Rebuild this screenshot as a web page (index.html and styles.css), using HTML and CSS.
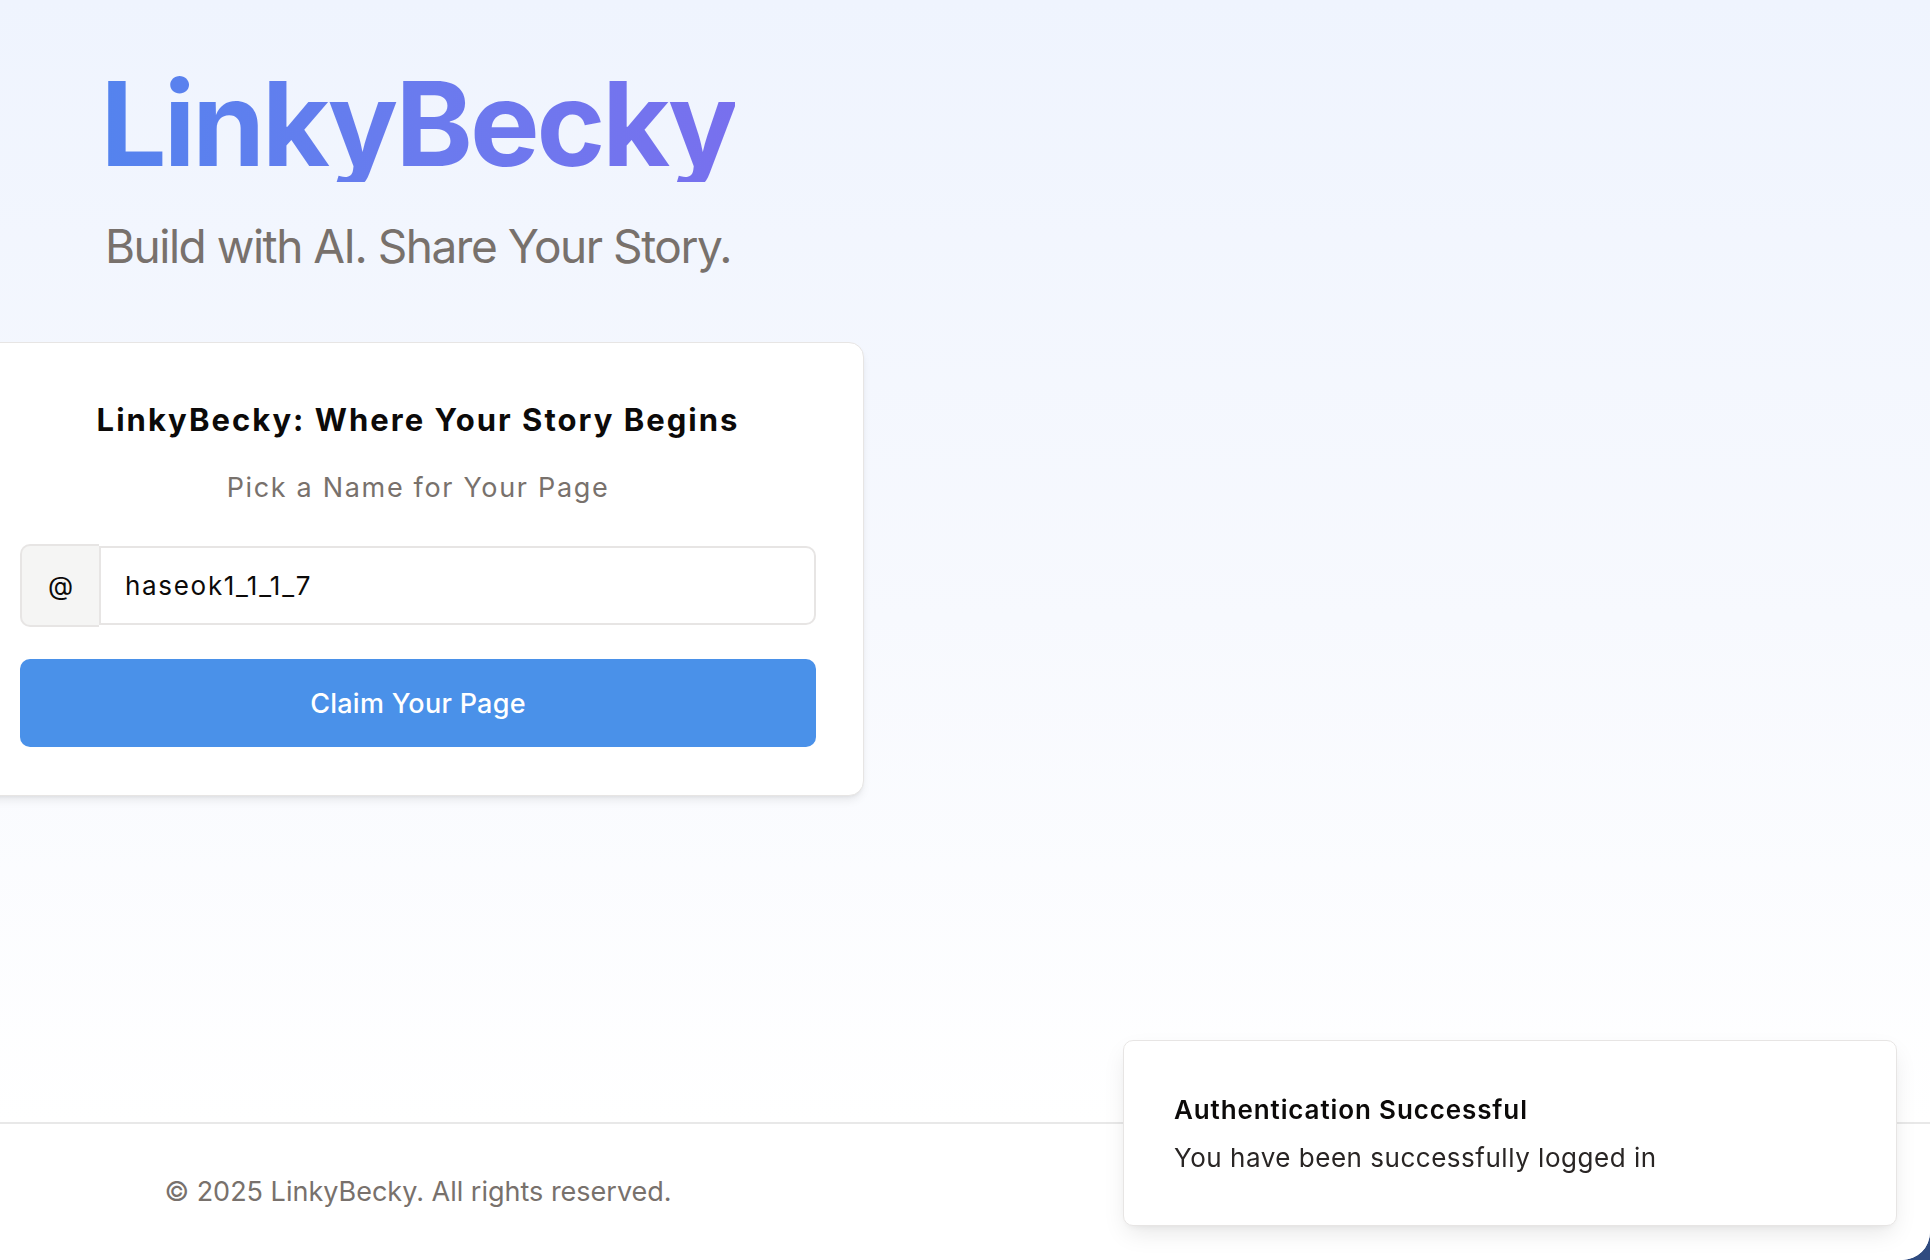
FILE: index.html
```html
<!DOCTYPE html>
<html lang="en">
<head>
<meta charset="utf-8">
<title>LinkyBecky</title>
<link rel="stylesheet" href="styles.css">
</head>
<body>
<div class="page">
  <main class="main">
    <section class="hero">
      <h1 class="brand">LinkyBecky</h1>
      <p class="tagline">Build with AI. Share Your Story.</p>
      <div class="card">
        <h2 class="card-title">LinkyBecky: Where Your Story Begins</h2>
        <p class="card-sub">Pick a Name for Your Page</p>
        <div class="field">
          <span class="prefix">@</span>
          <input class="name-input" type="text" value="haseok1_1_1_7">
        </div>
        <button class="claim" type="button">Claim Your Page</button>
      </div>
    </section>
  </main>
  <footer class="footer">
    <p class="copy">© 2025 LinkyBecky. All rights reserved.</p>
  </footer>
  <div class="toast">
    <p class="toast-title">Authentication Successful</p>
    <p class="toast-desc">You have been successfully logged in</p>
  </div>
</div>
</body>
</html>
```

FILE: styles.css
```css
html, body {
  margin: 0;
  padding: 0;
}

body {
  background: #2f4b80;
  font-family: Inter, "Noto Sans", Arial, sans-serif;
}

.page {
  min-height: 100vh;
  display: flex;
  flex-direction: column;
  background: #ffffff;
  border-bottom-right-radius: 28px;
  overflow: hidden;
}

.main {
  flex: 1;
  background: linear-gradient(180deg, #eff4fe 0%, #f7f9fe 55%, #ffffff 100%);
}

.hero {
  width: 836px;
  display: flex;
  flex-direction: column;
  align-items: center;
  padding-top: 65px;
}

.brand {
  margin: 0;
  font-size: 117px;
  line-height: 117px;
  font-weight: 700;
  letter-spacing: -0.026em;
  background: linear-gradient(90deg, #5483ee 0%, #6a7bee 50%, #7870ee 100%);
  -webkit-background-clip: text;
  background-clip: text;
  color: transparent;
}

.tagline {
  margin: 34px 0 0;
  font-size: 46px;
  line-height: 60px;
  letter-spacing: -0.032em;
  color: #78716c;
}

.card {
  margin-top: 66px;
  width: 892px;
  flex-shrink: 0;
  box-sizing: border-box;
  padding: 59px 47px 48px;
  background: #ffffff;
  border: 1px solid #e7e5e4;
  border-radius: 15px;
  box-shadow: 0 6px 10px -2px rgba(0, 0, 0, 0.08), 0 2px 4px -2px rgba(0, 0, 0, 0.08);
  display: flex;
  flex-direction: column;
  align-items: center;
}

.card-title {
  margin: 0;
  font-size: 31px;
  line-height: 36px;
  font-weight: 700;
  letter-spacing: 0.065em;
  color: #0c0a09;
}

.card-sub {
  margin: 32px 0 0;
  font-size: 27px;
  line-height: 36px;
  letter-spacing: 0.062em;
  color: #78716c;
}

.field {
  margin-top: 38px;
  width: 100%;
  display: flex;
  align-items: center;
}

.prefix {
  width: 79px;
  height: 83px;
  box-sizing: border-box;
  display: flex;
  align-items: center;
  justify-content: center;
  background: #f5f5f4;
  border: 2px solid #e7e5e4;
  border-right: none;
  border-radius: 10px 0 0 10px;
  font-size: 26px;
  color: #0c0a09;
}

.name-input {
  flex: 1;
  min-width: 0;
  height: 79px;
  box-sizing: border-box;
  margin: 0;
  padding: 0 24px;
  border: 2px solid #e7e5e4;
  border-radius: 0 10px 10px 0;
  background: #ffffff;
  font-family: inherit;
  font-size: 26px;
  letter-spacing: 0.065em;
  color: #0c0a09;
  outline: none;
}

.claim {
  margin-top: 32px;
  width: 100%;
  height: 88px;
  border: none;
  border-radius: 10px;
  background: #4a91e9;
  color: #ffffff;
  font-family: inherit;
  font-size: 27px;
  font-weight: 500;
  letter-spacing: 0.01em;
}

.footer {
  background: #ffffff;
  border-top: 2px solid #e8e8e8;
  padding: 50px 0;
}

.copy {
  width: 836px;
  margin: 0;
  text-align: center;
  font-size: 27px;
  line-height: 36px;
  color: #78716c;
}

.toast {
  position: fixed;
  right: 33px;
  bottom: 34px;
  width: 774px;
  box-sizing: border-box;
  padding: 51px 50px 49px;
  background: #ffffff;
  border: 1px solid #e7e5e4;
  border-radius: 10px;
  box-shadow: 0 10px 25px -4px rgba(0, 0, 0, 0.1), 0 4px 8px -4px rgba(0, 0, 0, 0.08);
}

.toast-title {
  margin: 0;
  font-size: 26px;
  line-height: 36px;
  font-weight: 600;
  letter-spacing: 0.034em;
  color: #0c0a09;
}

.toast-desc {
  margin: 12px 0 0;
  font-size: 26px;
  line-height: 36px;
  letter-spacing: 0.02em;
  color: #292524;
}
```
